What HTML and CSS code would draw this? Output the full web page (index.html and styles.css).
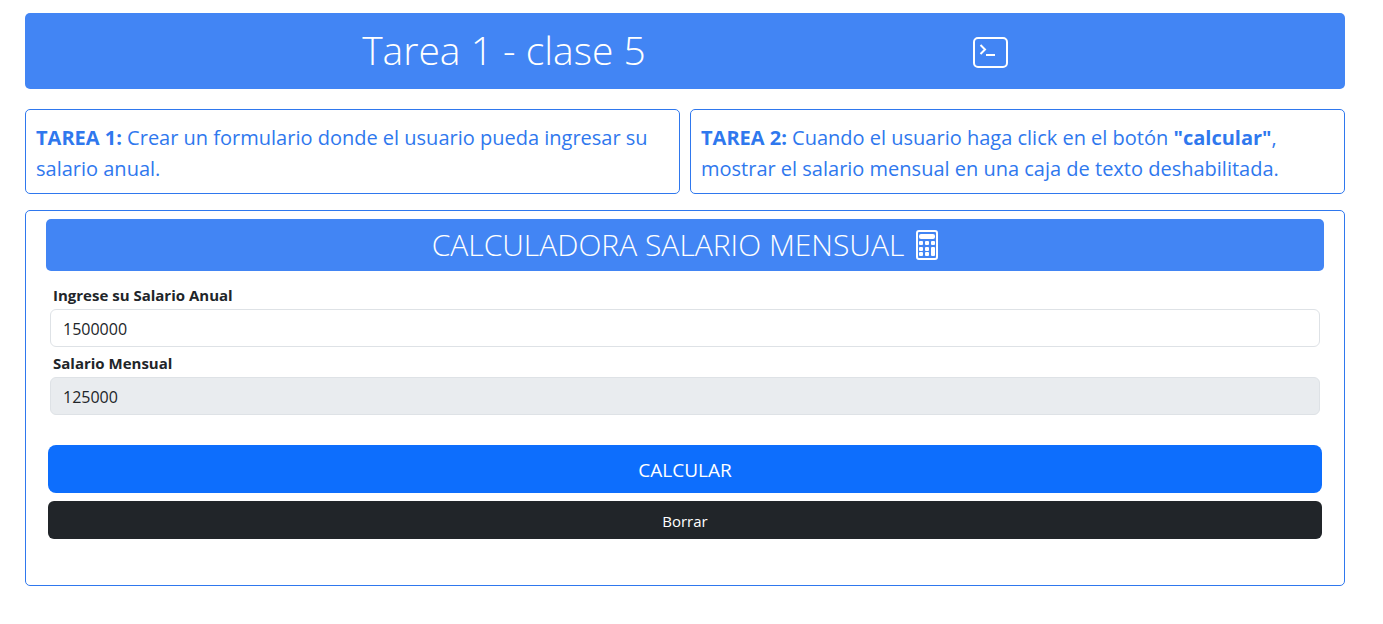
FILE: index.html
```html
<!DOCTYPE html>
<html lang="es">
<head>
<meta charset="utf-8">
<meta name="viewport" content="width=device-width, initial-scale=1">
<title>Tarea 1 - clase 5</title>
<link rel="stylesheet" href="styles.css">
</head>
<body>
<header class="banner">
  <h1 class="banner-title">Tarea 1 - clase 5</h1>
  <svg class="banner-icon" viewBox="0 0 35 31" fill="none" stroke="currentColor" stroke-width="2" aria-hidden="true">
    <rect x="1" y="1" width="33" height="29" rx="4"/>
    <path d="M7.500 8 12 12.500 7.500 17M13 18h9"/>
  </svg>
</header>
<main>
  <section class="tasks">
    <p class="task"><strong>TAREA 1:</strong> Crear un formulario donde el usuario pueda ingresar su salario anual.</p>
    <p class="task"><strong>TAREA 2:</strong> Cuando el usuario haga click en el botón <strong>"calcular"</strong>, mostrar el salario mensual en una caja de texto deshabilitada.</p>
  </section>
  <form class="calculator">
    <h2 class="calculator-title">
      <span>CALCULADORA SALARIO MENSUAL</span>
      <svg class="calculator-icon" viewBox="0 0 22 30" aria-hidden="true">
        <rect x="1" y="1" width="20" height="28" rx="2" fill="none" stroke="currentColor" stroke-width="2"/>
        <g fill="currentColor">
          <rect x="3" y="4" width="16" height="5" rx="2"/>
          <rect x="3" y="11" width="4" height="4" rx="1"/>
          <rect x="9" y="11" width="4" height="4" rx="1"/>
          <rect x="15" y="11" width="4" height="4" rx="1"/>
          <rect x="3" y="17" width="4" height="4" rx="1"/>
          <rect x="9" y="17" width="4" height="4" rx="1"/>
          <rect x="3" y="22" width="4" height="4" rx="1"/>
          <rect x="9" y="22" width="4" height="4" rx="1"/>
          <rect x="15" y="17" width="4" height="9" rx="1"/>
        </g>
      </svg>
    </h2>
    <div class="fields">
      <label class="label" for="anual">Ingrese su Salario Anual</label>
      <input class="input" id="anual" type="text" value="1500000">
      <label class="label" for="mensual">Salario Mensual</label>
      <input class="input" id="mensual" type="text" value="125000" disabled>
    </div>
    <div class="actions">
      <button class="button button-primary" type="button">CALCULAR</button>
      <button class="button button-dark" type="reset">Borrar</button>
    </div>
  </form>
</main>
</body>
</html>
```
FILE: styles.css
```css
* { box-sizing: border-box; }

body {
  margin: 0;
  padding: 13px 38px 38px 25px;
  background: #fff;
  color: #212529;
  font-family: "Segoe UI", "Open Sans", "Noto Sans", sans-serif;
  font-size: 15px;
  line-height: 24px;
}

h1, h2, p { margin: 0; }

.banner {
  display: flex;
  justify-content: space-evenly;
  align-items: center;
  padding: 14px 10px 12px;
  border-radius: 5px;
  background: #4285f4;
  color: #fff;
}

.banner-title {
  padding-bottom: 4px;
  font-size: 39px;
  font-weight: 300;
  line-height: 46px;
}

.banner-icon {
  width: 35px;
  height: 31px;
}

.tasks {
  display: grid;
  grid-template-columns: 1fr 1fr;
  gap: 10px;
  margin: 20px 0 16px;
}

.task {
  padding: 12px 10px 9px;
  border: 1px solid #2f78ee;
  border-radius: 5px;
  color: #2f78ee;
  font-size: 20px;
  line-height: 31px;
}

.calculator {
  padding: 8px 20px 46px;
  border: 1px solid #2f78ee;
  border-radius: 5px;
}

.calculator-title {
  display: flex;
  justify-content: center;
  align-items: center;
  gap: 12px;
  padding: 6px 0;
  border-radius: 5px;
  background: #4285f4;
  color: #fff;
  font-size: 30px;
  font-weight: 300;
  line-height: 40px;
}

.calculator-icon {
  width: 22px;
  height: 30px;
}

.fields {
  display: flex;
  flex-direction: column;
  padding: 8px 4px 0;
}

.label {
  padding: 4px 3px 2px;
  font-weight: 700;
  font-size: 15px;
}

.input {
  height: 38px;
  padding: 7px 12px 5px;
  border: 1px solid #dee2e6;
  border-radius: 6px;
  background: #fff;
  color: #212529;
  font: inherit;
  font-size: 16px;
}

.input:disabled {
  background: #e9ecef;
}

.actions {
  display: grid;
  gap: 8px;
  padding: 30px 2px 0;
}

.button {
  padding: 8px 12px 6px;
  border: 0;
  border-radius: 6px;
  color: #fff;
  font: inherit;
}

.button-primary {
  padding: 10px 16px 8px;
  border-radius: 8px;
  background: #0d6efd;
  font-size: 19px;
  line-height: 30px;
}

.button-dark {
  background: #212529;
}
```
